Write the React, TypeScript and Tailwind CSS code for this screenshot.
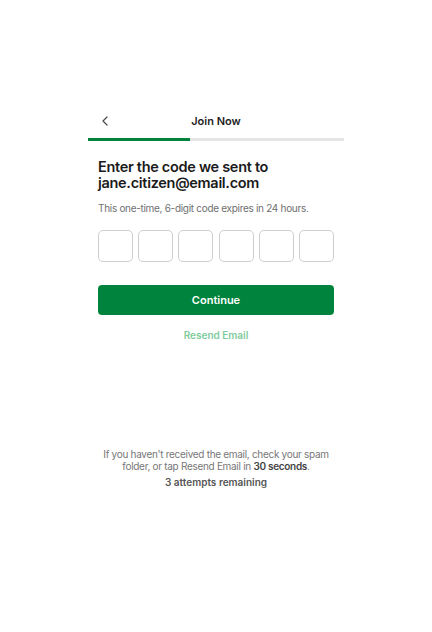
import React from "react";

export default function App() {
  return (
    <div
      className="w-[432px] h-[632px] bg-white"
      style={{ fontFamily: "Inter, 'Noto Sans', sans-serif" }}
    >
      <div className="w-[256px] mx-auto pt-[104px]">
        <div className="relative h-[34px] flex items-center justify-center">
          <button className="absolute left-[12px] top-[10px]">
            <svg width="10" height="14" viewBox="0 0 10 14" fill="none">
              <path d="M7 3 L3 7 L7 11" stroke="#4a4a4a" strokeWidth="1.2" strokeLinecap="round" strokeLinejoin="round" />
            </svg>
          </button>
          <span className="text-[11px] font-semibold text-[#1f1f1f]">Join Now</span>
        </div>
        <div className="h-[3px] bg-[#e4e4e4] flex">
          <div className="w-[102px] h-full bg-[#00843d]" />
        </div>
        <div className="px-[10px]">
          <h1 className="mt-[18px] text-[14.5px] leading-[16px] tracking-[-0.3px] font-semibold text-[#1a1a1a]">
            Enter the code we sent to
            <br />
            jane.citizen@email.com
          </h1>
          <p className="mt-[10px] text-[10px] leading-[14px] tracking-[-0.3px] text-[#6f6f6f] whitespace-nowrap">
            This one-time, 6-digit code expires in 24 hours.
          </p>
          <div className="mt-[15px] flex justify-between">
            {[0, 1, 2, 3, 4, 5].map((i) => (
              <div
                key={i}
                className="w-[35px] h-[32px] rounded-[5px] border border-[#cfcfcf] bg-white"
              />
            ))}
          </div>
          <button className="mt-[23px] w-full h-[30px] rounded-[4px] bg-[#00843d] text-white text-[11px] font-semibold">
            Continue
          </button>
          <div className="mt-[13px] text-center text-[10px] leading-[14px] font-semibold text-[#7fcb9c]">
            Resend Email
          </div>
          <div className="mt-[106px] -mx-[10px] text-center text-[10px] leading-[12px] tracking-[-0.3px] text-[#777] whitespace-nowrap">
            If you haven't received the email, check your spam
            <br />
            folder, or tap Resend Email in <span className="font-semibold text-[#444]">30 seconds</span>.
          </div>
          <div className="mt-[3px] text-center text-[10px] leading-[14px] font-semibold text-[#555]">
            3 attempts remaining
          </div>
        </div>
      </div>
    </div>
  );
}
